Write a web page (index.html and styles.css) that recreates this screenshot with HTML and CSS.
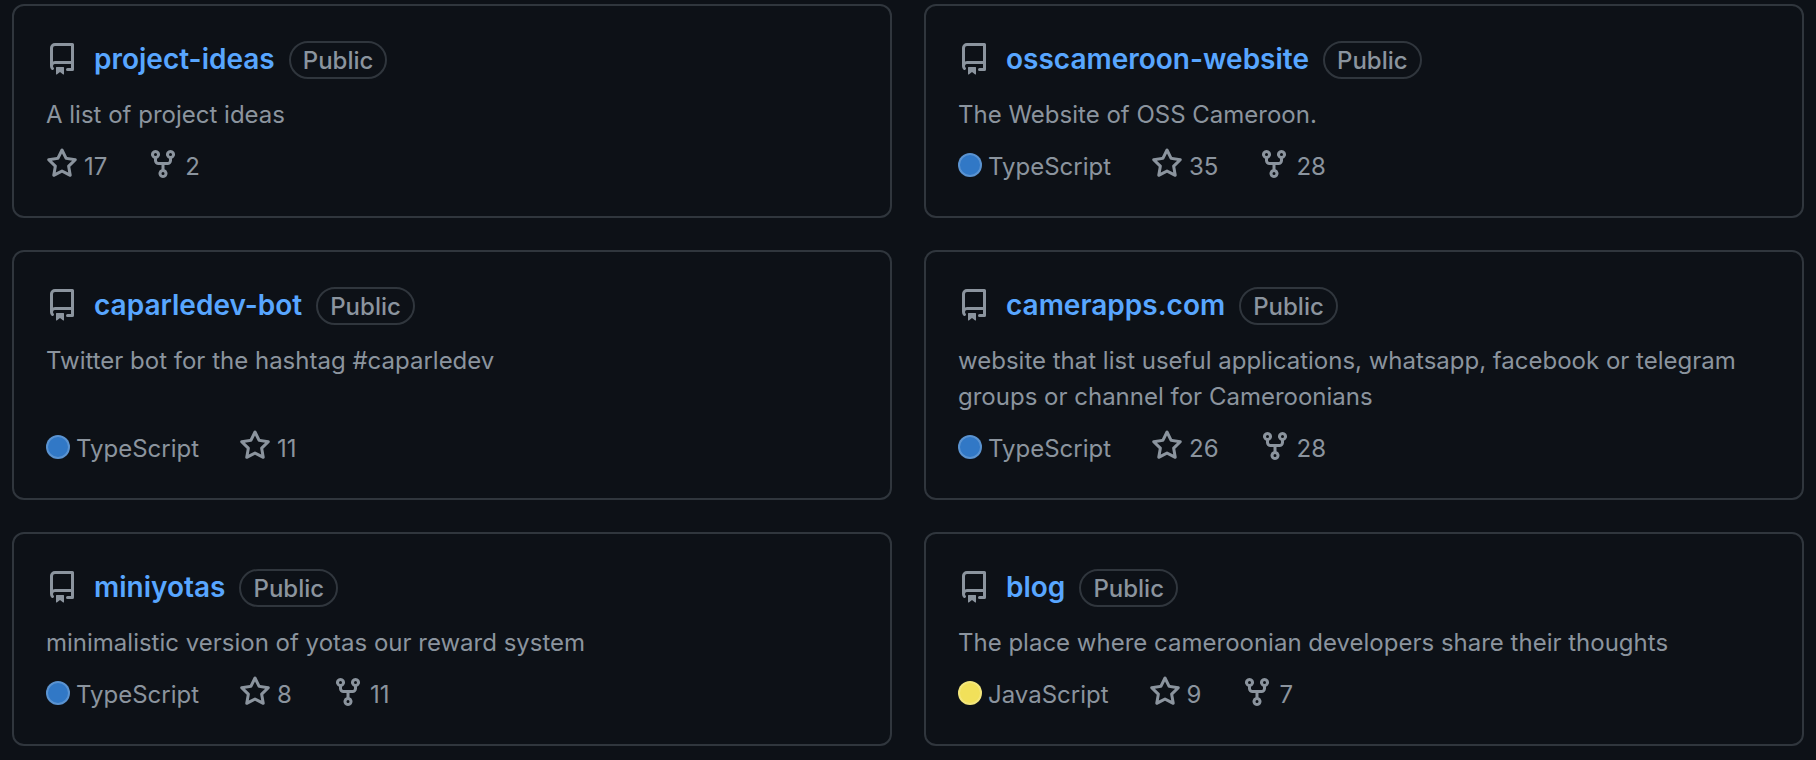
FILE: index.html
```html
<!DOCTYPE html>
<html lang="en">
<head>
<meta charset="utf-8">
<title>Repositories</title>
<meta name="viewport" content="width=device-width, initial-scale=1">
<link rel="stylesheet" href="styles.css">
</head>
<body>
<svg class="sprite" aria-hidden="true">
  <symbol id="repo" viewBox="0 0 16 16"><path d="M2 2.5A2.5 2.5 0 0 1 4.5 0h8.75a.75.75 0 0 1 .75.75v12.5a.75.75 0 0 1-.75.75h-2.5a.75.75 0 0 1 0-1.5h1.75v-2h-8a1 1 0 0 0-.714 1.7.75.75 0 1 1-1.072 1.05A2.495 2.495 0 0 1 2 11.5Zm10.5-1h-8a1 1 0 0 0-1 1v6.708A2.486 2.486 0 0 1 4.5 9h8ZM5 12.25a.25.25 0 0 1 .25-.25h3.5a.25.25 0 0 1 .25.25v3.25a.25.25 0 0 1-.4.2l-1.45-1.087a.249.249 0 0 0-.3 0L5.4 15.7a.25.25 0 0 1-.4-.2Z"/></symbol>
  <symbol id="star" viewBox="0 0 16 16"><path d="M8 .25a.75.75 0 0 1 .673.418l1.882 3.815 4.21.612a.75.75 0 0 1 .416 1.279l-3.046 2.97.719 4.192a.751.751 0 0 1-1.088.791L8 12.347l-3.766 1.98a.75.75 0 0 1-1.088-.79l.72-4.194L.818 6.374a.75.75 0 0 1 .416-1.28l4.21-.611L7.327.668A.75.75 0 0 1 8 .25Zm0 2.445L6.615 5.5a.75.75 0 0 1-.564.41l-3.097.45 2.24 2.184a.75.75 0 0 1 .216.664l-.528 3.084 2.769-1.456a.75.75 0 0 1 .698 0l2.77 1.456-.53-3.084a.75.75 0 0 1 .216-.664l2.24-2.183-3.096-.45a.75.75 0 0 1-.564-.41L8 2.694Z"/></symbol>
  <symbol id="fork" viewBox="0 0 16 16"><path d="M5 5.372v.878c0 .414.336.75.75.75h4.5a.75.75 0 0 0 .75-.75v-.878a2.25 2.25 0 1 1 1.5 0v.878a2.25 2.25 0 0 1-2.25 2.25h-1.5v2.128a2.251 2.251 0 1 1-1.5 0V8.5h-1.5A2.25 2.25 0 0 1 3.5 6.25v-.878a2.25 2.25 0 1 1 1.5 0ZM5 3.25a.75.75 0 1 0-1.5 0 .75.75 0 0 0 1.5 0Zm6.75.75a.75.75 0 1 0 0-1.5.75.75 0 0 0 0 1.5Zm-3 8.75a.75.75 0 1 0-1.5 0 .75.75 0 0 0 1.5 0Z"/></symbol>
</svg>
<main class="repos">
  <article class="card">
    <header class="head"><svg class="icon head-icon" aria-hidden="true"><use href="#repo"/></svg><a class="name" href="#">project-ideas</a><span class="badge">Public</span></header>
    <p class="desc">A list of project ideas</p>
    <div class="stats">
      <a class="stat" href="#" aria-label="17 stars"><svg class="icon"><use href="#star"/></svg>17</a>
      <a class="stat" href="#" aria-label="2 forks"><svg class="icon"><use href="#fork"/></svg>2</a>
    </div>
  </article>
  <article class="card">
    <header class="head"><svg class="icon head-icon" aria-hidden="true"><use href="#repo"/></svg><a class="name" href="#">osscameroon-website</a><span class="badge">Public</span></header>
    <p class="desc">The Website of OSS Cameroon.</p>
    <div class="stats">
      <span class="stat"><span class="dot typescript"></span>TypeScript</span>
      <a class="stat" href="#" aria-label="35 stars"><svg class="icon"><use href="#star"/></svg>35</a>
      <a class="stat" href="#" aria-label="28 forks"><svg class="icon"><use href="#fork"/></svg>28</a>
    </div>
  </article>
  <article class="card">
    <header class="head"><svg class="icon head-icon" aria-hidden="true"><use href="#repo"/></svg><a class="name" href="#">caparledev-bot</a><span class="badge">Public</span></header>
    <p class="desc">Twitter bot for the hashtag #caparledev</p>
    <div class="stats">
      <span class="stat"><span class="dot typescript"></span>TypeScript</span>
      <a class="stat" href="#" aria-label="11 stars"><svg class="icon"><use href="#star"/></svg>11</a>
    </div>
  </article>
  <article class="card">
    <header class="head"><svg class="icon head-icon" aria-hidden="true"><use href="#repo"/></svg><a class="name" href="#">camerapps.com</a><span class="badge">Public</span></header>
    <p class="desc">website that list useful applications, whatsapp, facebook or telegram groups or channel for Cameroonians</p>
    <div class="stats">
      <span class="stat"><span class="dot typescript"></span>TypeScript</span>
      <a class="stat" href="#" aria-label="26 stars"><svg class="icon"><use href="#star"/></svg>26</a>
      <a class="stat" href="#" aria-label="28 forks"><svg class="icon"><use href="#fork"/></svg>28</a>
    </div>
  </article>
  <article class="card">
    <header class="head"><svg class="icon head-icon" aria-hidden="true"><use href="#repo"/></svg><a class="name" href="#">miniyotas</a><span class="badge">Public</span></header>
    <p class="desc">minimalistic version of yotas our reward system</p>
    <div class="stats">
      <span class="stat"><span class="dot typescript"></span>TypeScript</span>
      <a class="stat" href="#" aria-label="8 stars"><svg class="icon"><use href="#star"/></svg>8</a>
      <a class="stat" href="#" aria-label="11 forks"><svg class="icon"><use href="#fork"/></svg>11</a>
    </div>
  </article>
  <article class="card">
    <header class="head"><svg class="icon head-icon" aria-hidden="true"><use href="#repo"/></svg><a class="name" href="#">blog</a><span class="badge">Public</span></header>
    <p class="desc">The place where cameroonian developers share their thoughts</p>
    <div class="stats">
      <span class="stat"><span class="dot javascript"></span>JavaScript</span>
      <a class="stat" href="#" aria-label="9 stars"><svg class="icon"><use href="#star"/></svg>9</a>
      <a class="stat" href="#" aria-label="7 forks"><svg class="icon"><use href="#fork"/></svg>7</a>
    </div>
  </article>
</main>
</body>
</html>
```

FILE: styles.css
```css
* {
  box-sizing: border-box;
}

body {
  margin: 0;
  background: #0d1117;
  color: #8b949e;
  font: 24px/36px Inter, "Liberation Sans", sans-serif;
}

.sprite {
  display: none;
}

.repos {
  display: grid;
  grid-template-columns: repeat(2, minmax(0, 1fr));
  gap: 32px;
  padding: 4px 12px 14px;
}

.card {
  display: flex;
  flex-direction: column;
  padding: 32px 32px 30px;
  border: 2px solid #30363d;
  border-radius: 12px;
}

.head {
  display: flex;
  align-items: baseline;
}

.icon {
  flex: none;
  width: 32px;
  height: 32px;
  fill: currentColor;
}

.head-icon {
  align-self: center;
}

.name {
  margin: 0 14px 0 16px;
  color: #58a6ff;
  font-size: 28px;
  font-weight: 600;
  line-height: 42px;
  text-decoration: none;
}

.badge {
  padding: 2px 12px 0;
  border: 2px solid #30363d;
  border-radius: 20px;
  font-weight: 500;
  line-height: 32px;
}

.desc {
  flex: 1;
  margin: 17px 0 15px;
}

.stats {
  display: flex;
  gap: 40px;
  line-height: 38px;
}

.stat {
  display: flex;
  gap: 6px;
  color: inherit;
  text-decoration: none;
}

.dot {
  width: 24px;
  height: 24px;
  margin-top: 5px;
  border: 2px solid rgba(255, 255, 255, 0.2);
  border-radius: 50%;
}

.typescript {
  background: #3178c6;
}

.javascript {
  background: #f1e05a;
}
```
